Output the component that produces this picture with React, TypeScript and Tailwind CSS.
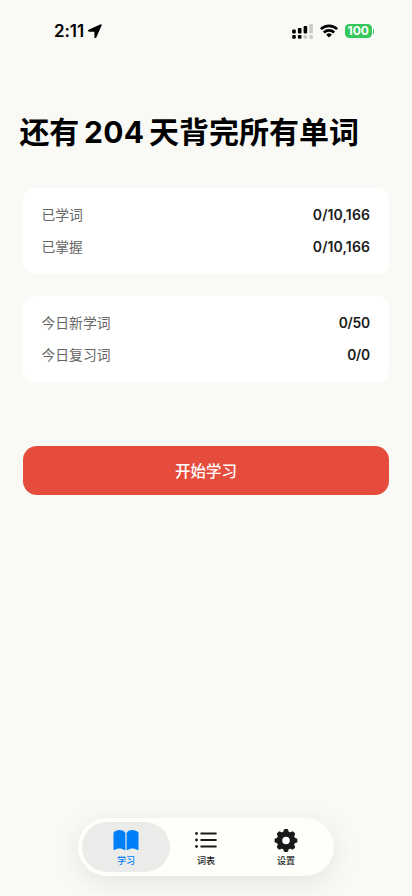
import classNames from "clsx";

const groups = [
  {
    id: 0,
    style: "pb-0",
    valueStyle: "text-[14px] tracking-[0.1px]",
    rows: [
      { label: "已学词", value: "0/10,166" },
      { label: "已掌握", value: "0/10,166" },
    ],
  },
  {
    id: 1,
    style: "pt-px",
    valueStyle: "text-[13.8px] tracking-[-0.2px]",
    rows: [
      { label: "今日新学词", value: "0/50" },
      { label: "今日复习词", value: "0/0" },
    ],
  },
];

const tabs = [
  { id: 0, name: "学习", icon: BookIcon, active: true },
  { id: 1, name: "词表", icon: ListIcon, active: false },
  { id: 2, name: "设置", icon: GearIcon, active: false },
];

function BookIcon() {
  return (
    <svg width="26" height="22" viewBox="0 0 26 22" fill="currentColor">
      <path d="M12.4 3.900C11.600 2 9.300 1 6.600 1 4 1 1.700 2 .9 3.300c-.3.400-.4.700-.4 1.200v15.900c0 .6.500.9 1 .6 1.400-.9 3.100-1.500 5-1.500s3.600.6 5 1.500c.4.200.9 0 .9-.6Z" />
      <path d="M13.600 3.900C14.400 2 16.700 1 19.400 1c2.600 0 4.900 1 5.700 2.300.3.400.4.700.4 1.200v15.900c0 .6-.5.900-1 .6-1.400-.9-3.100-1.500-5-1.500s-3.600.6-5 1.500c-.4.200-.9 0-.9-.6Z" />
    </svg>
  );
}

function ListIcon() {
  return (
    <svg width="22" height="22" viewBox="0 0 22 22" fill="currentColor">
      {[4.5, 11, 17.5].map((y) => (
        <g key={y}>
          <circle cx="1.500" cy={y} r="1.400" />
          <rect x="5.300" y={y - 0.9} width="16.500" height="1.800" rx="0.9" />
        </g>
      ))}
    </svg>
  );
}

function GearIcon() {
  return (
    <svg width="24" height="24" viewBox="-12 -12.500 24 24" fill="currentColor">
      <circle r="6.500" fill="none" stroke="currentColor" strokeWidth="5.400" />
      {[0, 45, 90, 135, 180, 225, 270, 315].map((angle) => (
        <path
          key={angle}
          transform={`rotate(${angle})`}
          d="M-2.900-8-2.300-10.200Q-2-11.400-.9-11.400H.9Q2-11.400 2.300-10.200L2.900-8Z"
        />
      ))}
    </svg>
  );
}

function StatusBar() {
  return (
    <header className="flex h-[62px] items-center justify-between pl-[54px] pr-[38px]">
      <div className="flex items-center gap-[4px]">
        <span className="font-['Inter'] text-[17px] font-semibold leading-5 tracking-[-0.1px]">
          2:11
        </span>
        <svg width="14" height="14" viewBox="0 0 14 14" fill="currentColor">
          <path d="M12.800.3.6 5.800c-1 .5-.7 1.900.4 1.900h5c.3 0 .4.100.4.400v4.900c0 1.100 1.400 1.400 1.900.4L13.700 1.200c.3-.6-.3-1.200-.9-.9Z" />
        </svg>
      </div>
      <div className="flex items-center gap-[7px]">
        <svg width="21" height="15" viewBox="0 0 21 15" fill="currentColor">
          <rect x="0.200" y="5.500" width="3.600" height="4" rx="1" />
          <rect x="5.900" y="4" width="3.600" height="5.500" rx="1" />
          <rect x="11.600" y="2" width="3.600" height="7.500" rx="1" />
          <rect x="17.300" y="0" width="3.600" height="9.500" rx="1" fill="#cbccc8" />
          <rect x="0.200" y="11" width="3.600" height="3.700" rx="1" />
          <rect x="5.900" y="11" width="3.600" height="3.700" rx="1" />
          <rect x="11.600" y="11" width="3.600" height="3.700" rx="1" fill="#cbccc8" />
          <rect x="17.300" y="11" width="3.600" height="3.700" rx="1" fill="#cbccc8" />
        </svg>
        <svg
          width="18"
          height="14"
          viewBox="0 0 18 14"
          fill="none"
          stroke="currentColor"
          strokeWidth="2.600"
        >
          <path d="M.9 5.100a11.700 11.700 0 0 1 16.200 0" />
          <path d="M3.800 8.500a7.500 7.500 0 0 1 10.400 0" />
          <path d="M9 13.600 6.100 10.700a4.200 4.200 0 0 1 5.800 0Z" fill="currentColor" stroke="none" />
        </svg>
        <div className="flex items-center gap-px">
          <span className="flex h-[14px] w-[26.5px] items-center justify-center rounded-[4.5px] bg-[#34c759] font-['Inter'] text-[12px] font-bold leading-none text-white">
            100
          </span>
          <span className="h-[5px] w-[1.5px] rounded-r-full bg-[#34c759]" />
        </div>
      </div>
    </header>
  );
}

export default function App() {
  return (
    <div className="flex h-[896px] w-[412px] flex-col overflow-hidden bg-[#f9faf6] font-['Inter','Noto_Sans_CJK_SC',sans-serif] text-black">
      <StatusBar />
      <main className="flex flex-1 flex-col px-[23px] pt-[49px]">
        <h1 className="-ml-[3.5px] flex h-[43px] items-center gap-[5px] whitespace-nowrap text-[30px] font-bold">
          <span className="tracking-[-0.3px]">还有</span>
          <span className="tracking-[0.4px]">204</span>
          <span className="-ml-[0.5px]">天背完所有单词</span>
        </h1>
        <div className="mt-[34px] flex flex-col gap-[22px]">
          {groups.map((group) => (
            <section
              key={group.id}
              className={classNames(
                "flex h-[86px] flex-col justify-center gap-2 rounded-xl bg-white px-[19px]",
                group.style
              )}
            >
              {group.rows.map((row) => (
                <div key={row.label} className="flex h-6 items-center justify-between">
                  <span className="-ml-[0.5px] text-[13.8px] text-[#666]">{row.label}</span>
                  <span
                    className={classNames("-mt-px font-semibold text-[#1a1a1a]", group.valueStyle)}
                  >
                    {row.value}
                  </span>
                </div>
              ))}
            </section>
          ))}
        </div>
        <button className="mt-16 h-[49px] rounded-[14px] bg-[#e64c3c] pt-[2px] text-[15.5px] font-medium text-white">
          开始学习
        </button>
      </main>
      <nav className="mx-auto mb-5 flex h-[58px] w-[256px] items-center rounded-full bg-[#fefefa] pl-[4px] shadow-[0_6px_28px_rgba(0,0,0,0.09)]">
        {tabs.map((tab) => (
          <a
            key={tab.id}
            className={classNames(
              "flex h-[50px] flex-col items-center rounded-full pt-[7px]",
              tab.active ? "w-[88px] bg-[#ebebe9] text-[#0080f8]" : "w-[80px] text-[#1a1a1a]",
              tab.id === 1 && "-ml-1"
            )}
          >
            <span className="flex h-[22px] items-center justify-center">
              <tab.icon />
            </span>
            <span className="mt-[3px] text-[9px] font-medium leading-[13px]">{tab.name}</span>
          </a>
        ))}
      </nav>
    </div>
  );
}
